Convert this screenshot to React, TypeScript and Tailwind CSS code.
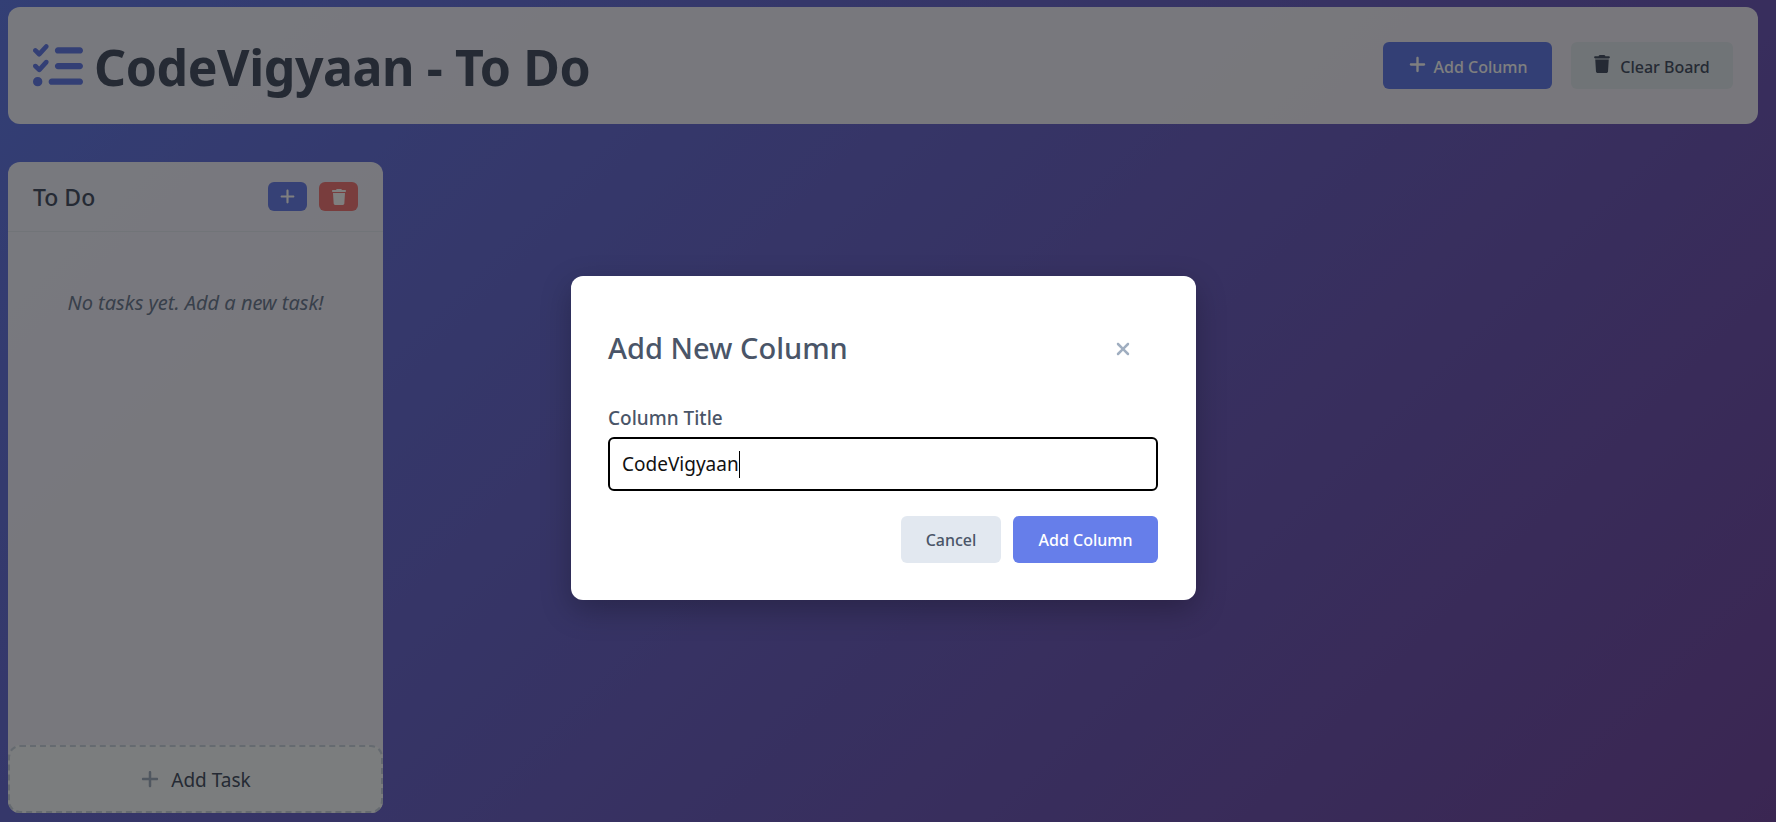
import { FaListCheck, FaPlus, FaTrash, FaXmark } from "react-icons/fa6";

export default function App() {
  return (
    <div className="relative h-screen overflow-hidden bg-[linear-gradient(135deg,#667eea_0%,#764ba2_104%)] pl-2 pr-[18px] pt-[7px] pb-[9px] font-['Noto_Sans',sans-serif] flex flex-col">
      <header className="h-[117px] shrink-0 bg-white/90 rounded-xl pl-[25px] pr-[25px] flex items-center justify-between mb-[38px]">
        <div className="flex items-center gap-[11px]">
          <FaListCheck className="text-[#667eea] w-[50px] h-[50px]" />
          <h1 className="text-[50px] font-bold leading-none text-[#4a5568] tracking-[-0.42px] mt-[3px]">CodeVigyaan - To Do</h1>
        </div>
        <div className="flex gap-[19px]">
          <button className="w-[169px] h-[47px] rounded-md bg-[#667eea] text-white text-[16px] font-medium flex items-center justify-center gap-[7px] pt-[3px]">
            <FaPlus className="w-[19px] h-[19px] -mt-[6px]" />
            Add Column
          </button>
          <button className="w-[162px] h-[47px] rounded-md bg-[#e0e8ee] text-[#4a5568] text-[16px] font-medium flex items-center justify-center gap-[10px] pt-[3px]">
            <FaTrash className="w-[16px] h-[18px] -mt-[6px]" />
            Clear Board
          </button>
        </div>
      </header>

      <section className="w-[375px] flex-1 bg-white/90 rounded-xl flex flex-col">
        <div className="h-[70px] shrink-0 border-b border-[#e2e8f0] flex items-center justify-between pl-[25px] pr-[25px]">
          <h2 className="text-[23px] font-medium text-[#4a5568] mt-px">To Do</h2>
          <div className="flex gap-3">
            <button className="w-[39px] h-[29px] rounded-md bg-[#6d82ec] text-white flex items-center justify-center">
              <FaPlus className="w-[17px] h-[17px]" />
            </button>
            <button className="w-[39px] h-[29px] rounded-md bg-[#f27a7a] text-white flex items-center justify-center">
              <FaTrash className="w-[14px] h-[16px]" />
            </button>
          </div>
        </div>
        <div className="flex-1 pt-[57px] text-center">
          <p className="text-[20px] italic leading-[28px] text-[#718096]">No tasks yet. Add a new task!</p>
        </div>
        <button className="h-[68px] shrink-0 rounded-xl border-2 border-dashed border-[#cbd5e0] bg-[#f7fafc] text-[#4a5568] text-[19px] flex items-center justify-center gap-[11px] pt-[2px]">
          <FaPlus className="w-[20px] h-[20px] text-[#a0aec0] -mt-[2px]" />
          Add Task
        </button>
      </section>

      <div className="absolute inset-0 bg-black/50 flex items-center justify-center pr-[9px] pt-[54px]">
        <div className="w-[625px] h-[324px] bg-white rounded-xl pl-[37px] pr-[38px] pt-[53px] shadow-[0_10px_30px_rgba(0,0,0,0.25)]">
          <div className="flex items-center justify-between h-[36px]">
            <h3 className="text-[29px] font-medium leading-none text-[#4a5568]">Add New Column</h3>
            <FaXmark className="w-[20px] h-[20px] text-[#a0aec0] mr-[25px] mt-[3px]" />
          </div>
          <label className="block mt-[41px] text-[19px] font-medium leading-[24px] text-[#4a5568]">Column Title</label>
          <div className="mt-[7px] h-[54px] rounded-md border-2 border-black pl-[12px] flex items-center text-[19px] text-[#111]">
            CodeVigyaan
            <span className="inline-block w-px h-[27px] bg-black" />
          </div>
          <div className="flex justify-end gap-3 mt-[25px]">
            <button className="w-[100px] h-[47px] rounded-md bg-[#e2e8f0] text-[#4a5568] text-[16px] font-medium">Cancel</button>
            <button className="w-[145px] h-[47px] rounded-md bg-[#667eea] text-white text-[16px] font-medium">Add Column</button>
          </div>
        </div>
      </div>
    </div>
  );
}
